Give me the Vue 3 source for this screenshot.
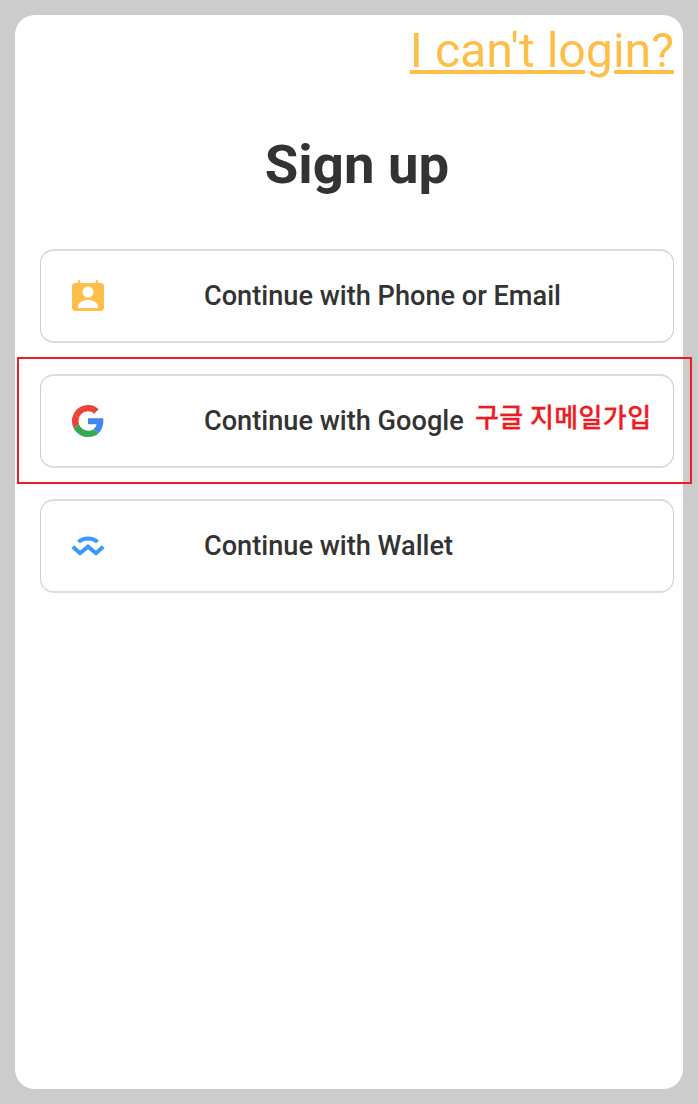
<script setup>
const options = [
  { id: 'contact', label: 'Continue with Phone or Email' },
  { id: 'google', label: 'Continue with Google' },
  { id: 'wallet', label: 'Continue with Wallet' }
]
</script>

<template>
  <div class="page">
    <div class="card">
      <div class="help-row">
        <a class="help-link" href="#">I can't login?</a>
      </div>
      <h1 class="title">Sign up</h1>
      <div class="options">
        <button v-for="item in options" :key="item.id" class="option" type="button">
          <span class="option-icon">
            <svg v-if="item.id === 'contact'" viewBox="0 0 34 34" width="34" height="34">
              <path fill="#ffbd4a" d="M7 1.200h2.200v2.800h15.600V1.200H27v2.800h2.600A3.400 3.400 0 0 1 33 7.400v21.200a3.400 3.400 0 0 1-3.400 3.400H4.400A3.400 3.400 0 0 1 1 28.600V7.400A3.400 3.400 0 0 1 4.400 4H7z" />
              <circle cx="17" cy="13" r="5.500" fill="#fff" />
              <path fill="#fff" d="M7 29v-1.500C7 23.500 12.500 21 17 21s10 2.500 10 6.500V29z" />
            </svg>
            <svg v-else-if="item.id === 'google'" viewBox="-1.500 -1.500 51 51" width="34" height="34">
              <path fill="#ea4335" d="M24 9.500c3.540 0 6.710 1.220 9.210 3.600l6.850-6.850C35.900 2.380 30.470 0 24 0 14.620 0 6.510 5.380 2.560 13.220l7.980 6.190C12.430 13.720 17.740 9.500 24 9.500z" />
              <path fill="#4285f4" d="M46.980 24.550c0-1.570-.15-3.090-.38-4.550H24v9.020h12.940c-.58 2.960-2.260 5.480-4.780 7.180l7.730 6c4.510-4.180 7.090-10.360 7.090-17.650z" />
              <path fill="#ea4335" d="M10.530 28.590c-.48-1.450-.76-2.990-.76-4.590s.27-3.140.76-4.590l-7.980-6.190C.92 16.460 0 20.120 0 24c0 3.880.92 7.540 2.560 10.780l7.970-6.190z" />
              <path fill="#34a853" d="M24 48c6.480 0 11.930-2.130 15.890-5.810l-7.730-6c-2.150 1.450-4.920 2.300-8.160 2.300-6.260 0-11.570-4.220-13.470-9.910l-7.980 6.190C6.510 42.620 14.620 48 24 48z" />
            </svg>
            <svg v-else viewBox="0 0 34 34" width="34" height="34">
              <path fill="none" stroke="#3b99fc" stroke-width="4" d="M7.500 13c5-4.800 14-4.800 19 0" />
              <path fill="none" stroke="#3b99fc" stroke-width="4" d="M1.800 17.800l7.200 6.400 8-6.600 8 6.600 7.200-6.400" />
            </svg>
          </span>
          <span class="option-label">{{ item.label }}</span>
        </button>
      </div>
    </div>

    <!-- 标注框 -->
    <div class="mark-box"></div>
    <span class="mark-text">구글 지메일가입</span>
  </div>
</template>

<style>
html, body {
  margin: 0;
  background: #cccccc;
}
</style>

<style scoped>
.page {
  position: relative;
  box-sizing: border-box;
  width: 698px;
  height: 1104px;
  padding: 15px;
  background: #cccccc;
  font-family: Roboto, "Noto Sans", sans-serif;
}

.card {
  box-sizing: border-box;
  height: 1074px;
  padding: 0 9px 0 25px;
  background: #fff;
  border-radius: 20px;
}

.help-row {
  display: flex;
  justify-content: flex-end;
  height: 70px;
}

.help-link {
  font-size: 48.200px;
  font-weight: 400;
  line-height: 72px;
  color: #ffbd4a;
  text-decoration: underline;
}

.title {
  margin: 40px 0 0;
  font-size: 54.500px;
  font-weight: 700;
  line-height: 78px;
  text-align: center;
  color: #333;
}

.options {
  display: flex;
  flex-direction: column;
  gap: 31px;
  margin-top: 46px;
}

.option {
  display: flex;
  align-items: center;
  box-sizing: border-box;
  width: 100%;
  height: 94px;
  padding: 0 0 0 30px;
  background: #fff;
  border-style: solid;
  border-width: 2px 1px;
  border-color: #dcdcdc #cfcfcf;
  border-radius: 14px;
  font-family: inherit;
  text-align: left;
}

.option-icon {
  display: flex;
  width: 133px;
  flex-shrink: 0;
}

.option-label {
  font-size: 27.150px;
  font-weight: 500;
  color: #333;
}

.mark-box {
  position: absolute;
  left: 17px;
  top: 357px;
  width: 675px;
  height: 127px;
  box-sizing: border-box;
  border: 2px solid #ed1c24;
}

.mark-text {
  position: absolute;
  left: 475px;
  top: 398px;
  font-family: "Noto Sans CJK KR", sans-serif;
  font-size: 26px;
  font-weight: 500;
  -webkit-text-stroke: 0.3px #ed1c24;
  letter-spacing: 0.4px;
  line-height: 36px;
  white-space: nowrap;
  color: #ed1c24;
}
</style>
